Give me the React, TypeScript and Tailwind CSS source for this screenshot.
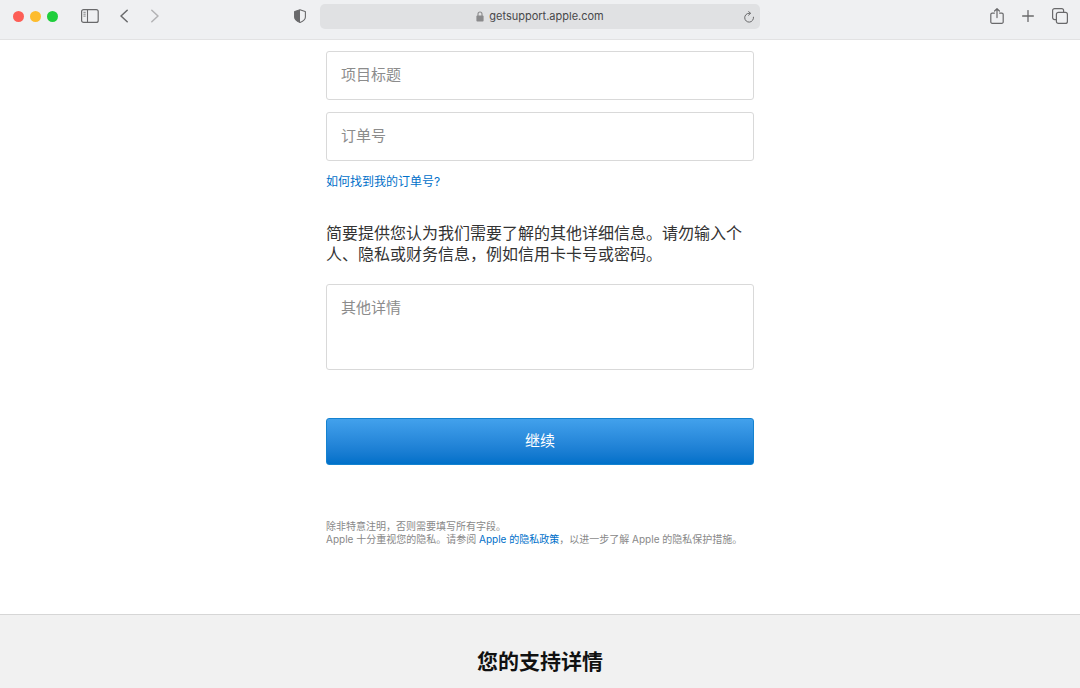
import { useId } from "react";

const fieldClass =
  "block w-full rounded-[3px] border border-[#d9d9d9] bg-white px-3.5 text-[15px] text-[#333] placeholder:text-[#8c8c8c] placeholder:opacity-100 outline-none focus:border-[#0070c9]";

function BrowserBar() {
  return (
    <header className="grid h-10 grid-cols-[1fr_minmax(0,440px)_1fr] border-b border-[#e2e2e3] bg-[#eff0f2] pb-[7px] text-[#69696b]">
      <div className="flex items-center pl-[13px]">
        <div className="flex gap-1.5">
          <button aria-label="关闭" className="h-[11px] w-[11px] rounded-full bg-[#fd5e56]" />
          <button aria-label="最小化" className="h-[11px] w-[11px] rounded-full bg-[#fdbc2e]" />
          <button aria-label="全屏" className="h-[11px] w-[11px] rounded-full bg-[#1fce3c]" />
        </div>
        <button aria-label="边栏" className="ml-[23px]">
          <svg width="18" height="14" viewBox="0 0 18 14" fill="none" stroke="currentColor">
            <rect x="0.6" y="0.6" width="16.6" height="12.8" rx="2" strokeWidth="1.2" />
            <path d="M6.5 1v12" strokeWidth="1.1" />
            <path d="M2.4 3.3h2.3M2.4 5.2h2.3M2.4 7.1h2.3" strokeWidth="0.8" />
          </svg>
        </button>
        <button aria-label="后退" className="ml-[21px]">
          <svg width="8" height="14" viewBox="0 0 8 14" fill="none" stroke="currentColor" strokeWidth="1.5" strokeLinecap="round" strokeLinejoin="round">
            <path d="M7.2 1.2 1 7l6.2 5.8" />
          </svg>
        </button>
        <button aria-label="前进" className="ml-[23px] text-[#b2b2b4]">
          <svg width="8" height="14" viewBox="0 0 8 14" fill="none" stroke="currentColor" strokeWidth="1.5" strokeLinecap="round" strokeLinejoin="round">
            <path d="M.8 1.2 7 7 .8 12.8" />
          </svg>
        </button>
        <button aria-label="隐私报告" className="mr-3.5 ml-auto">
          <svg width="12" height="14" viewBox="0 0 12 14">
            <path
              d="M6 .7 11.1 2.5c.2.1.3.2.3.4v5c0 2.6-2.3 4.2-5.4 5.5C2.9 12.1.6 10.5.6 7.9v-5c0-.2.1-.3.3-.4z"
              fill="none"
              stroke="currentColor"
              strokeWidth="1.1"
              strokeLinejoin="round"
            />
            <path d="M6 .7v12.7C2.9 12.1.6 10.5.6 7.9V2.6z" fill="currentColor" />
          </svg>
        </button>
      </div>

      <div className="mt-1 mb-[-4px] flex h-[25px] items-center rounded-[5px] bg-[#e0e1e3] px-[5px]">
        <div className="w-3" />
        <div className="flex flex-1 items-center justify-center gap-[5px] text-[11px] text-[#48484a]">
          <svg width="8" height="11" viewBox="0 0 8 11" className="text-[#8a8a8c]">
            <rect x="0.4" y="4.6" width="7.2" height="5.8" rx="1" fill="currentColor" />
            <path d="M2 5V3a2 2 0 0 1 4 0v2" fill="none" stroke="currentColor" strokeWidth="1.1" />
          </svg>
          getsupport.apple.com
        </div>
        <button aria-label="重新载入">
          <svg width="12" height="12" viewBox="0 0 12 12" fill="none" stroke="currentColor" strokeWidth="1" strokeLinecap="round" strokeLinejoin="round">
            <path d="M10.5 6.2A4.4 4.4 0 1 1 6.1 2.3h1.2" />
            <path d="M5.6.5 7.5 2.3 5.6 4.2" />
          </svg>
        </button>
      </div>

      <div className="flex items-center justify-end pr-3">
        <button aria-label="共享">
          <svg width="14" height="17" viewBox="0 0 14 17" fill="none" stroke="currentColor" strokeWidth="1.2" strokeLinecap="round" strokeLinejoin="round">
            <path d="M4.4 5.1H2.2A1.4 1.4 0 0 0 .8 6.5v7.4a1.4 1.4 0 0 0 1.4 1.4h9.6a1.4 1.4 0 0 0 1.4-1.4V6.5a1.4 1.4 0 0 0-1.4-1.4H9.6" />
            <path d="M7 9.6V.8M4.6 3 7 .6 9.4 3" />
          </svg>
        </button>
        <button aria-label="新标签页" className="ml-[18px]">
          <svg width="12" height="12" viewBox="0 0 12 12" fill="none" stroke="currentColor" strokeWidth="1.3" strokeLinecap="round">
            <path d="M6 .6v10.8M.6 6h10.8" />
          </svg>
        </button>
        <button aria-label="标签页概览" className="ml-[18px]">
          <svg width="16" height="16" viewBox="0 0 16 16" fill="none" stroke="currentColor" strokeWidth="1.2">
            <rect x="4.4" y="4.4" width="11" height="11" rx="2" />
            <path d="M4.4 11.6H2.6a2 2 0 0 1-2-2v-7a2 2 0 0 1 2-2h7a2 2 0 0 1 2 2v1.8" />
          </svg>
        </button>
      </div>
    </header>
  );
}

export default function App() {
  const detailsId = useId();

  return (
    <div className="flex min-h-screen flex-col bg-white font-['Inter','Noto_Sans_CJK_SC',sans-serif]">
      <BrowserBar />

      <main className="mx-auto w-full max-w-[428px] pt-[11px] pb-[68px]">
        <form onSubmit={(e) => e.preventDefault()}>
          <div className="space-y-3">
            <input type="text" aria-label="项目标题" placeholder="项目标题" className={`${fieldClass} h-[49px] pb-0.5`} />
            <input type="text" aria-label="订单号" placeholder="订单号" className={`${fieldClass} h-[49px] pb-0.5`} />
            <a href="#order" className="block text-[12px] leading-[18px] text-[#0070c9] hover:underline">
              如何找到我的订单号?
            </a>
          </div>

          <label htmlFor={detailsId} className="mt-8 block text-[16px] leading-[21px] text-[#333]">
            简要提供您认为我们需要了解的其他详细信息。请勿输入个人、隐私或财务信息，例如信用卡卡号或密码。
          </label>
          <textarea
            id={detailsId}
            placeholder="其他详情"
            className={`${fieldClass} mt-[19px] h-[86px] resize-none py-3 leading-[22px]`}
          />

          <button
            type="submit"
            className="mt-12 block h-[47px] w-full rounded-[3px] border border-[#1482d0] bg-linear-to-b from-[#42a1ec] to-[#0070c9] text-[15px] text-white"
          >
            继续
          </button>
        </form>

        {/* Privacy note */}
        <div className="mt-[55px] text-[10px] leading-[13px] text-[#888]">
          <p>除非特意注明，否则需要填写所有字段。</p>
          <p>
            Apple 十分重视您的隐私。请参阅{" "}
            <a href="#privacy" className="text-[#0070c9] hover:underline">
              Apple 的隐私政策
            </a>
            ，以进一步了解 Apple 的隐私保护措施。
          </p>
        </div>
      </main>

      <footer className="flex-1 border-t border-[#d6d6d6] bg-[#f1f1f1] pt-[33px]">
        <h2 className="text-center text-[21px] leading-7 font-bold text-[#111]">您的支持详情</h2>
      </footer>
    </div>
  );
}
